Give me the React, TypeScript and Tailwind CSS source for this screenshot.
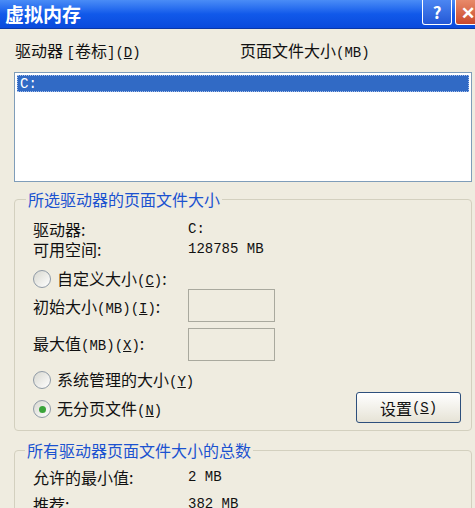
import React from "react";

function M({ children }: { children: React.ReactNode }) {
  return <span className="font-['Liberation_Mono',monospace] text-[14px]">{children}</span>;
}

function Key({ k }: { k: string }) {
  return (
    <M>
      (<u>{k}</u>)
    </M>
  );
}

function Radio({ checked = false }: { checked?: boolean }) {
  return (
    <span className="flex h-[18px] w-[18px] shrink-0 items-center justify-center rounded-full border border-[#8f9aa6] bg-gradient-to-br from-[#d8d8d0] to-white">
      {checked && <span className="h-[7px] w-[7px] rounded-full bg-[#3aa43a]" />}
    </span>
  );
}

function Row({ label, value }: { label: string; value: string }) {
  return (
    <div className="flex h-[20px] items-center">
      <span className="w-[155px]">{label}</span>
      <M>{value}</M>
    </div>
  );
}

export default function App() {
  return (
    <div className="h-[508px] w-[475px] overflow-hidden bg-[#efece0] font-['Noto_Sans_CJK_SC',sans-serif] text-[16px] leading-[20px] text-[#111]">
      {/* title bar */}
      <div className="flex h-[29px] items-start justify-between border-b border-[#0a37a8] bg-gradient-to-b from-[#4a8cf6] via-[#1159ea] to-[#0a4adc]">
        <div className="pl-[5px] pt-[3px] text-[19px] font-bold leading-[22px] text-white">虚拟内存</div>
        <div className="flex gap-[3px]">
          <div className="flex h-[25px] w-[30px] items-center justify-center rounded-b-[3px] border border-t-0 border-white bg-gradient-to-b from-[#4c86f2] to-[#2458d6] text-[17px] font-bold text-white">
            ?
          </div>
          <div className="mr-[-6px] flex h-[25px] w-[26px] shrink-0 items-center justify-center rounded-b-[3px] border border-t-0 border-white bg-gradient-to-b from-[#e88a6a] to-[#c9482c] text-[17px] font-bold text-white">
            ✕
          </div>
        </div>
      </div>

      <div className="pl-[14px] pr-[3px]">
        {/* header */}
        <div className="mt-[12px] flex h-[20px] items-center pl-[1px]">
          <span className="w-[225px]">
            驱动器 <M>[</M>卷标<M>]</M>
            <Key k="D" />
          </span>
          <span>
            页面文件大小<M>(MB)</M>
          </span>
        </div>

        {/* list */}
        <div className="mt-[11px] h-[110px] border border-[#7f9db9] bg-white p-[2px]">
          <div className="flex h-[17px] items-center border border-dotted border-[#a9c0ea] bg-[#316ac5] pl-[2px] text-white">
            <M>C:</M>
          </div>
        </div>

        {/* group 1 */}
        <fieldset className="mt-[8px] rounded-[4px] border border-[#d3d0bf]">
          <legend className="ml-[11px] px-[2px] leading-[18px] text-[#1b52d0]">所选驱动器的页面文件大小</legend>
          <div className="pb-[7px] pl-[18px] pr-[10px] pt-[11px]">
            <Row label="驱动器:" value="C:" />
            <Row label="可用空间:" value="128785 MB" />
            <div className="mt-[10px] flex h-[20px] items-center gap-[6px]">
              <Radio />
              <span>
                自定义大小<Key k="C" />:
              </span>
            </div>
            <div className="flex h-[33px] items-center">
              <span className="w-[155px] pt-[3px]">
                初始大小<M>(MB)</M>
                <Key k="I" />:
              </span>
              <div className="h-[33px] w-[87px] border border-[#a9a99e]" />
            </div>
            <div className="mt-[6px] flex h-[33px] items-center">
              <span className="w-[155px]">
                最大值<M>(MB)</M>
                <Key k="X" />:
              </span>
              <div className="h-[33px] w-[87px] border border-[#a9a99e]" />
            </div>
            <div className="mt-[9px] flex h-[20px] items-center gap-[6px]">
              <Radio />
              <span>
                系统管理的大小<Key k="Y" />
              </span>
            </div>
            <div className="mt-[2px] flex h-[31px] items-center justify-between">
              <div className="flex items-center gap-[6px] pt-[3px]">
                <Radio checked />
                <span>
                  无分页文件<Key k="N" />
                </span>
              </div>
              <button className="flex h-[31px] w-[105px] items-center justify-center rounded-[3px] border border-[#2d4f7c] bg-gradient-to-b from-white to-[#e6e3d6]">
                设置<Key k="S" />
              </button>
            </div>
          </div>
        </fieldset>

        {/* group 2 */}
        <fieldset className="mt-[10px] rounded-[4px] border border-[#d3d0bf]">
          <legend className="ml-[10px] px-[2px] leading-[18px] text-[#1b52d0]">所有驱动器页面文件大小的总数</legend>
          <div className="pl-[18px] pt-[8px]">
            <Row label="允许的最小值:" value="2 MB" />
            <div className="mt-[7px]">
              <Row label="推荐:" value="382 MB" />
            </div>
          </div>
        </fieldset>
      </div>
    </div>
  );
}
